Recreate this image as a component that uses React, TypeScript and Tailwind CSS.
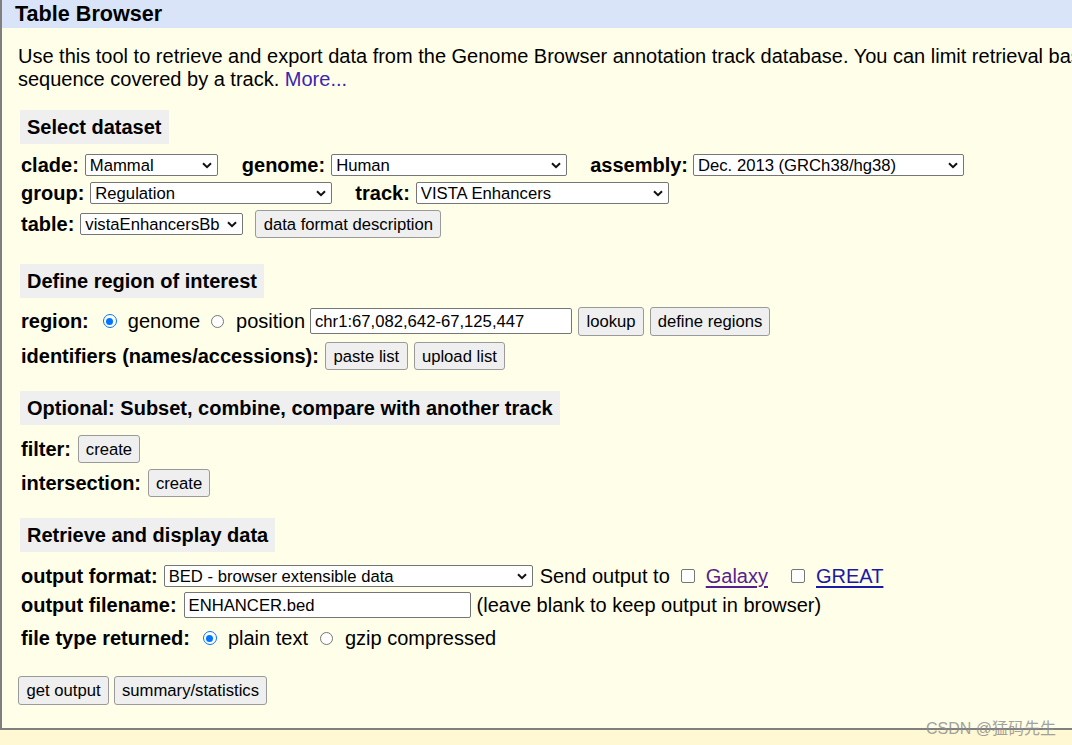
import type { ReactNode } from "react";

const FONT = { fontFamily: '"Liberation Sans", Arial, sans-serif' };

function Heading({ children, className = "" }: { children: ReactNode; className?: string }) {
  return (
    <div className={`ml-[2px] flex h-[34px] items-center bg-[#efefef] px-[7px] text-[20px] font-bold ${className}`}>
      {children}
    </div>
  );
}

function Label({ children, className = "" }: { children: ReactNode; className?: string }) {
  return <span className={`whitespace-nowrap text-[20px] font-bold ${className}`}>{children}</span>;
}

function Select({ value, className = "" }: { value: string; className?: string }) {
  return (
    <div
      className={`flex h-[22px] shrink-0 items-center rounded-[2px] border border-[#767676] bg-white pl-[4px] pr-[5px] text-[16.67px] ${className}`}
    >
      <span className="flex-1 overflow-hidden whitespace-nowrap">{value}</span>
      <svg width="10" height="7" viewBox="0 0 10 7" className="shrink-0">
        <path d="M1 1.2l4 4 4-4" fill="none" stroke="#111" strokeWidth="2" />
      </svg>
    </div>
  );
}

function Button({ children, className = "" }: { children: ReactNode; className?: string }) {
  return (
    <button
      type="button"
      className={`flex h-[28px] shrink-0 items-center justify-center whitespace-nowrap rounded-[3px] border border-[#9a9a9a] bg-[#efefef] text-[16.67px] ${className}`}
    >
      {children}
    </button>
  );
}

function TextInput({ value, className = "" }: { value: string; className?: string }) {
  return (
    <div
      className={`flex h-[26px] shrink-0 items-center rounded-[2px] border border-[#767676] bg-white pl-[4px] text-[16.67px] ${className}`}
    >
      {value}
    </div>
  );
}

function Radio({ checked = false, className = "" }: { checked?: boolean; className?: string }) {
  if (checked) {
    return (
      <span className={`flex h-[14px] w-[14px] shrink-0 items-center justify-center rounded-full border-[1.5px] border-[#0075ff] bg-white ${className}`}>
        <span className="h-[7px] w-[7px] rounded-full bg-[#0075ff]" />
      </span>
    );
  }
  return <span className={`h-[13px] w-[13px] shrink-0 rounded-full border border-[#767676] bg-white ${className}`} />;
}

function Checkbox({ className = "" }: { className?: string }) {
  return <span className={`h-[14px] w-[14px] shrink-0 rounded-[2px] border border-[#767676] bg-white ${className}`} />;
}

export default function App() {
  return (
    <div className="relative h-[745px] w-full overflow-hidden bg-[#fff8d2] text-black" style={FONT}>
      <div className="h-[730px] w-[1600px] border-b-2 border-l-2 border-[#808080] bg-[#fffee8]">
        <div className="flex h-[28px] items-center bg-[#d9e4f8] pl-[13px] text-[21.6px] font-bold">Table Browser</div>

        <div className="flex flex-col items-start pl-[16px]">
          <p className="mt-[17px] whitespace-nowrap text-[20px] leading-[23px]">
            Use this tool to retrieve and export data from the Genome Browser annotation track database. You can limit
            retrieval based on data attributes and intersect or merge with data from another track, or retrieve DNA
            <br />
            sequence covered by a track. <span className="text-[#3a25b0]">More...</span>
          </p>

          {/* Select dataset */}
          <Heading className="mt-[19px]">Select dataset</Heading>
          <div className="ml-[3px] mt-[7px] flex h-[28px] items-center">
            <Label>clade:</Label>
            <Select value="Mammal" className="ml-[6px] w-[133px]" />
            <Label className="ml-[24px]">genome:</Label>
            <Select value="Human" className="ml-[6px] w-[236px]" />
            <Label className="ml-[23px]">assembly:</Label>
            <Select value="Dec. 2013 (GRCh38/hg38)" className="ml-[5px] w-[271px]" />
          </div>
          <div className="ml-[3px] flex h-[28px] items-center">
            <Label>group:</Label>
            <Select value="Regulation" className="ml-[6px] w-[242px]" />
            <Label className="ml-[23px]">track:</Label>
            <Select value="VISTA Enhancers" className="ml-[6px] w-[253px]" />
          </div>
          <div className="ml-[3px] mt-[3px] flex h-[28px] items-center">
            <Label>table:</Label>
            <Select value="vistaEnhancersBb" className="ml-[6px] w-[163px]" />
            <Button className="ml-[12px] w-[186px]">data format description</Button>
          </div>

          {/* Define region */}
          <Heading className="mt-[26px]">Define region of interest</Heading>
          <div className="ml-[3px] mt-[8px] flex h-[30px] items-center">
            <Label>region:</Label>
            <Radio checked className="ml-[14px]" />
            <span className="ml-[11px] text-[20px]">genome</span>
            <Radio className="ml-[11px]" />
            <span className="ml-[12px] text-[20px]">position</span>
            <TextInput value="chr1:67,082,642-67,125,447" className="ml-[5px] w-[262px] pl-[3px]" />
            <Button className="ml-[6px] h-[29px] w-[66px]">lookup</Button>
            <Button className="ml-[6px] h-[29px] w-[120px]">define regions</Button>
          </div>
          <div className="ml-[3px] mt-[6px] flex h-[28px] items-center">
            <Label>identifiers (names/accessions):</Label>
            <Button className="ml-[6px] w-[83px]">paste list</Button>
            <Button className="ml-[6px] w-[91px]">upload list</Button>
          </div>

          {/* Optional */}
          <Heading className="mt-[21px]">Optional: Subset, combine, compare with another track</Heading>
          <div className="ml-[3px] mt-[10px] flex h-[28px] items-center">
            <Label>filter:</Label>
            <Button className="ml-[7px] w-[62px]">create</Button>
          </div>
          <div className="ml-[3px] mt-[6px] flex h-[28px] items-center">
            <Label>intersection:</Label>
            <Button className="ml-[7px] w-[62px]">create</Button>
          </div>

          {/* Retrieve */}
          <Heading className="mt-[21px]">Retrieve and display data</Heading>
          <div className="ml-[3px] mt-[13px] flex h-[22px] items-center">
            <Label>output format:</Label>
            <Select value="BED - browser extensible data" className="ml-[6px] w-[369px]" />
            <span className="ml-[7px] whitespace-nowrap text-[20px]">Send output to</span>
            <Checkbox className="ml-[11px]" />
            <span className="ml-[11px] text-[20px] text-[#5a1f8c] underline underline-offset-[3px]">Galaxy</span>
            <Checkbox className="ml-[23px]" />
            <span className="ml-[11px] text-[20px] text-[#1b1aa6] underline underline-offset-[3px]">GREAT</span>
          </div>
          <div className="ml-[3px] mt-[5px] flex h-[26px] items-center">
            <Label>output filename:</Label>
            <TextInput value="ENHANCER.bed" className="ml-[7px] w-[287px]" />
            <span className="ml-[6px] whitespace-nowrap text-[20px]">(leave blank to keep output in browser)</span>
          </div>
          <div className="ml-[3px] mt-[9px] flex h-[22px] items-center">
            <Label>file type returned:</Label>
            <Radio checked className="ml-[13px]" />
            <span className="ml-[11px] whitespace-nowrap text-[20px]">plain text</span>
            <Radio className="ml-[12px]" />
            <span className="ml-[12px] whitespace-nowrap text-[20px]">gzip compressed</span>
          </div>

          <div className="mt-[27px] flex h-[29px] items-center gap-[5px]">
            <Button className="h-[29px] w-[91px]">get output</Button>
            <Button className="h-[29px] w-[153px]">summary/statistics</Button>
          </div>
        </div>
      </div>

      <div
        className="absolute right-[16px] top-[717px] text-[16px] text-[#8c8c8c] opacity-80"
        style={{ fontFamily: '"Liberation Sans", "Noto Sans CJK SC", sans-serif' }}
      >
        CSDN @猛码先生
      </div>
    </div>
  );
}
